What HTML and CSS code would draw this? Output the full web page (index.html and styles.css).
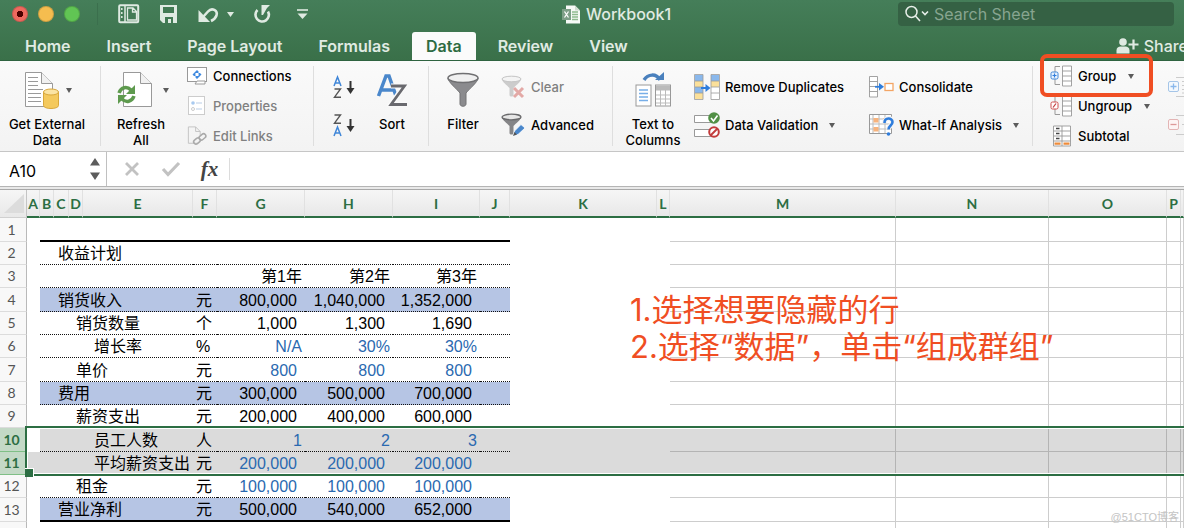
FILE: index.html
```html
<!DOCTYPE html>
<html lang="zh-CN">
<head>
<meta charset="utf-8">
<title>Workbook1</title>
<link rel="stylesheet" href="styles.css">
</head>
<body>
<header class="window-head">
  <div class="titlebar">
    <div class="lights">
      <button class="light light-close" aria-label="Close"></button>
      <button class="light light-min" aria-label="Minimize"></button>
      <button class="light light-max" aria-label="Zoom"></button>
    </div>
    <div class="quick">
      <button class="tool" aria-label="Gallery"><svg width="22" height="20" viewBox="0 0 22 20"><rect x="1.2" y="1.2" width="19" height="17" rx="1" fill="none" stroke="#dfeae2" stroke-width="2"/><path d="M7 1v18" stroke="#dfeae2" stroke-width="1.5"/><path d="M3.8 4v2M3.8 8v2M3.8 12v2" stroke="#dfeae2" stroke-width="1.5"/><path d="M9.500 4h5.500l3.500 3.500v8.500h-9zM14.500 4v4h4" fill="none" stroke="#dfeae2" stroke-width="1.300"/></svg></button>
      <button class="tool" aria-label="Save"><svg width="20" height="20" viewBox="0 0 20 20"><path d="M1 1h17v18H4l-3-3z" fill="#dfeae2"/><path d="M4 3h11v6H4zM6 13h8v6h-2v-4H9v4H6z" fill="#427a54"/></svg></button>
      <button class="tool" aria-label="Undo"><svg width="22" height="20" viewBox="0 0 22 20"><path d="M5 13l5-5.500c4-4.500 10-1 8.500 4-1 3-2.500 4-5.500 5.500" fill="none" stroke="#dfeae2" stroke-width="2.600"/><path d="M.5 6v12h11.500z" fill="#dfeae2"/></svg></button>
      <button class="tool caret-tool" aria-label="Undo history"><svg width="7" height="6" viewBox="0 0 7 6"><path d="M0 1h7l-3.500 5z" fill="#dfeae2"/></svg></button>
      <button class="tool" aria-label="Repeat"><svg width="18" height="20" viewBox="0 0 18 20"><path d="M4.500 6a6.700 6.700 0 1 0 10.500 1.500" fill="none" stroke="#dfeae2" stroke-width="2.600"/><path d="M8.500 1h8.500l-3 3-4 7H8.500z" fill="#dfeae2"/></svg></button>
      <button class="tool more-tool" aria-label="Customize toolbar"><svg width="11" height="11" viewBox="0 0 11 11"><path d="M0 1h11" stroke="#dfeae2" stroke-width="1.600"/><path d="M0.500 4.500h10L5.500 10z" fill="#dfeae2"/></svg></button>
    </div>
    <h1 class="doc-title"><svg width="18" height="19" viewBox="0 0 18 19"><path d="M4 .5h9l5 5V18.500H4z" fill="#f6f9f6"/><path d="M13 .5v5h5" fill="#cfdcd0"/><path d="M10 7h6M10 9.500h6M10 12h6M10 14.500h6" stroke="#8fba8f" stroke-width="1.300"/><rect y="4" width="9" height="11" fill="#7d9f87"/><path d="M2.500 6.500l4 6M6.500 6.500l-4 6" stroke="#fff" stroke-width="1.300"/></svg>Workbook1</h1>
    <label class="search"><svg width="24" height="18" viewBox="0 0 24 18"><circle cx="6.500" cy="7" r="5.500" fill="none" stroke="#e6eee8" stroke-width="1.500"/><path d="M10.500 11l4.500 5M17 6.500l3 3 3-3" fill="none" stroke="#e6eee8" stroke-width="1.600"/></svg><input type="text" placeholder="Search Sheet" aria-label="Search Sheet"></label>
  </div>
  <nav class="tabs">
    <button class="tab">Home</button>
    <button class="tab">Insert</button>
    <button class="tab">Page Layout</button>
    <button class="tab">Formulas</button>
    <button class="tab active">Data</button>
    <button class="tab">Review</button>
    <button class="tab">View</button>
    <button class="share"><svg width="23" height="16" viewBox="0 0 23 16"><circle cx="7" cy="4" r="3.800" fill="#dfeae2"/><path d="M.5 15.500v-3c0-3 2-4 4-4h5c2 0 4 1 4 4v3z" fill="#dfeae2"/><path d="M12.500 6.500h10M17.500 1.500v10" stroke="#dfeae2" stroke-width="2.200"/></svg>Share</button>
  </nav>
</header>

<section class="ribbon" aria-label="Data">
  <div class="group g-external">
    <button class="big"><span class="pic"><svg width="44" height="40" viewBox="0 0 44 40"><path d="M.5 2.500h16l11 11v23H.5z" fill="#fff" stroke="#999"/><path d="M16.500 2.500v11h11" fill="#f1f1f1" stroke="#999"/><path d="M3 7.500h10M3 11.500h10M3 15.500h10M3 19.500h15M3 23.500h13M3 27.500h13M3 31.500h13" stroke="#9a9a9a"/><path d="M18.500 22v13.500c0 4 15 4 15 0V22z" fill="#f4c95d" stroke="#d9a83c"/><ellipse cx="26" cy="22" rx="7.500" ry="3" fill="#fbe4a4" stroke="#d9a83c"/></svg></span><span>Get External<br>Data</span></button>
    <span class="caret"></span>
  </div>
  <div class="group g-refresh">
    <button class="big"><span class="pic"><svg width="48" height="40" viewBox="0 0 48 40"><path d="M6.500 2.500h17l11 11v23h-28z" fill="#fff" stroke="#999"/><path d="M23.500 2.500v11h11" fill="#f1f1f1" stroke="#999"/><path d="M2 23c2-6 8-7 12-3" fill="none" stroke="#5e9a4e" stroke-width="3.500"/><path d="M18 15v9H9z" fill="#5e9a4e"/><path d="M17 26c-2 6-8 7-12 3" fill="none" stroke="#5e9a4e" stroke-width="3.500"/><path d="M1 34v-9h9z" fill="#5e9a4e"/></svg></span><span>Refresh<br>All</span></button>
    <span class="caret"></span>
    <div class="stack three">
      <button class="small"><svg width="20" height="20" viewBox="0 0 20 20"><rect x=".5" y="1.500" width="19" height="14" fill="#fff" stroke="#999"/><path d="M8 18h10v-3h-8z" fill="#fff" stroke="#999"/><path d="M10 4l3 3H7zM10 13l3-3H7zM5.500 8.500l3-3v6zM14.500 8.500l-3-3v6z" fill="#3f8ae0"/><circle cx="10" cy="8.500" r="1.200" fill="#fff"/></svg>Connections</button>
      <button class="small" disabled><svg width="20" height="20" viewBox="0 0 20 20"><rect x="1.500" y=".5" width="16" height="18" fill="#fff" stroke="#ccc"/><circle cx="6" cy="7" r="1.800" fill="#a9caf0"/><circle cx="6" cy="13" r="1.500" fill="none" stroke="#ccc"/><path d="M9 7h6M9 13h6" stroke="#b9cde6"/></svg>Properties</button>
      <button class="small" disabled><svg width="20" height="20" viewBox="0 0 22 22"><path d="M12 19H1.500V1h8l5 5v4M9.500 1v5h5" fill="none" stroke="#c0c0c0"/><g fill="none" stroke="#aaa" stroke-width="1.700"><rect x="7" y="14" width="8" height="5" rx="2.500" transform="rotate(-40 11 16.500)"/><rect x="13" y="9.500" width="8" height="5" rx="2.500" transform="rotate(-40 17 12)"/></g></svg>Edit Links</button>
    </div>
  </div>
  <div class="group g-sort">
    <div class="stack two">
      <button class="small" aria-label="Sort ascending"><svg width="23" height="24" viewBox="0 0 23 24"><path d="M1 11L4.500 2 8 11M2 8h5" fill="none" stroke="#3f86d8" stroke-width="1.500"/><path d="M1.500 14h6l-6 8.200h6.500" fill="none" stroke="#555" stroke-width="1.400"/><path d="M17.500 6v9" stroke="#333" stroke-width="2"/><path d="M13.500 13h8l-4 6z" fill="#333"/></svg></button>
      <button class="small" aria-label="Sort descending"><svg width="23" height="24" viewBox="0 0 23 24"><path d="M1.500 2h6l-6 8.200h6.500" fill="none" stroke="#555" stroke-width="1.400"/><path d="M1 23l3.500-9L8 23M2 20h5" fill="none" stroke="#3f86d8" stroke-width="1.500"/><path d="M17.500 6v9" stroke="#333" stroke-width="2"/><path d="M13.500 13h8l-4 6z" fill="#333"/></svg></button>
    </div>
    <button class="big"><span class="pic"><svg width="34" height="36" viewBox="0 0 34 36"><path d="M3.500 24L11 4h3l7 20M6.500 18h12" fill="none" stroke="#4a87cb" stroke-width="3.500"/><path d="M16 14h13L16 32h16" fill="none" stroke="#fafafa" stroke-width="5"/><path d="M16 14h13.500L16 32.500h16" fill="none" stroke="#69696e" stroke-width="2.800"/></svg></span><span>Sort</span></button>
  </div>
  <div class="group g-filter">
    <button class="big"><span class="pic"><svg width="34" height="36" viewBox="0 0 34 36"><path d="M2 6c0 4 8 10 12 15v11c0 3 6 3 6 0V21C24 16 32 10 32 6z" fill="#8b8b8e" stroke="#737375"/><ellipse cx="17" cy="6" rx="15" ry="4.500" fill="#f0f0f0" stroke="#707072" stroke-width="1.500"/></svg></span><span>Filter</span></button>
    <div class="stack two">
      <button class="small" disabled><svg width="25" height="24" viewBox="0 0 25 24"><path d="M1 4c0 3 5 6 7.500 9v7c0 2 4 2 4 0v-7C15 10 20 7 20 4z" fill="#ccc"/><ellipse cx="10.500" cy="4" rx="9.500" ry="2.800" fill="#f4f4f4" stroke="#c4c4c4"/><path d="M13 13l9 9M22 13l-9 9" stroke="#e3a9a6" stroke-width="3"/></svg>Clear</button>
      <button class="small"><svg width="25" height="24" viewBox="0 0 25 24"><path d="M1 4c0 3 5 6 7.500 9v7c0 2 4 2 4 0v-7C15 10 20 7 20 4z" fill="#858587"/><ellipse cx="10.500" cy="4" rx="9.500" ry="2.800" fill="#e6e6e6" stroke="#69696b" stroke-width="1.300"/><path d="M12 23l1.500-5L20 11.500l4 3.500-7 6.500z" fill="#4a87cb" stroke="#fff" stroke-width=".8"/><path d="M12 23l1.500-4 2.500 2.500z" fill="#555"/></svg>Advanced</button>
    </div>
  </div>
  <div class="group g-tools">
    <button class="big"><span class="pic"><svg width="38" height="38" viewBox="0 0 38 38"><path d="M10 9c4-6 12-7 16 0" fill="none" stroke="#4a80bd" stroke-width="3.500"/><path d="M21 9h9V1z" fill="#4a80bd"/><rect x="2" y="14" width="15" height="21" fill="#fff" stroke="#999"/><path d="M5 19h9M5 22.500h9M5 26h9M5 29.500h9" stroke="#77aee8" stroke-width="1.300"/><rect x="21.500" y="14" width="15" height="21" fill="#fff" stroke="#999"/><path d="M22 14.500h14v5H22z" fill="#bbb"/><path d="M22 24h14M22 28h14M22 32h14M26.500 19v16M31.500 19v16" stroke="#bbb"/></svg></span><span>Text to<br>Columns</span></button>
    <div class="stack two">
      <button class="small"><svg width="26" height="26" viewBox="0 0 26 26"><path d="M1 1h8v6H1zM17 1h8v6h-8zM1 13h8v6H1z" fill="#8ab8ec"/><path d="M1 7h8v6H1zM1 19h8v6H1zM17 7h8v6h-8z" fill="#fbe09a"/><path d="M17 13h8v12h-8z" fill="#fff"/><path d="M.5.5h8.500v25H.5zM17 .5h8.500v25H17zM1 7h8M1 13h8M1 19h8M17 7h8M17 13h8M17 19h8" fill="none" stroke="#999" stroke-width=".8"/><path d="M7 14h7" stroke="#2f7ddc" stroke-width="2"/><path d="M11.500 10l5 4-5 4z" fill="#2f7ddc"/></svg>Remove Duplicates</button>
      <button class="small"><svg width="26" height="26" viewBox="0 0 26 26"><path d="M.5 3.500h18v7H.5zM.5 17.500h18v7H.5z" fill="#fff" stroke="#999"/><circle cx="20" cy="6" r="5.800" fill="#519045"/><path d="M17 6l2.500 3L23.500 3.500" fill="none" stroke="#fff" stroke-width="1.600"/><circle cx="20" cy="20" r="4.800" fill="#fff" stroke="#c23b3b" stroke-width="2"/><path d="M16.500 23.500l7-7" stroke="#c23b3b" stroke-width="2"/></svg>Data Validation<span class="caret"></span></button>
    </div>
    <div class="stack two">
      <button class="small"><svg width="25" height="22" viewBox="0 0 25 22"><path d="M.5.5h8v20.500h-8zM.5 5.500h8M.5 10.500h8M.5 15.500h8" fill="#fff" stroke="#999" stroke-width=".9"/><path d="M6 10.800h6" stroke="#2f7ddc" stroke-width="1.800"/><path d="M10 7l5 3.800-5 3.800z" fill="#2f7ddc"/><rect x="16" y="7.500" width="8" height="7" fill="#fff" stroke="#f3a565" stroke-width="1.300"/></svg>Consolidate</button>
      <button class="small"><svg width="25" height="24" viewBox="0 0 25 24"><path d="M.5 1.500h22v19H.5z" fill="#fff" stroke="#999"/><path d="M4 2v18M10 2v18M16 2v18M1 6h21M1 11h21M1 16h21" stroke="#bbb"/><path d="M4.500 5h5v4.500h-5zM4.500 14h5v4.500h-5zM14 5h4v4h-4z" fill="#f7b37d"/><path d="M15.500 10c0-6 8-5.500 8-1 0 3.500-4 3.500-4 7.500" fill="none" stroke="#f5f5f5" stroke-width="5"/><path d="M15.500 10c0-6 8-5.500 8-1 0 3.500-4 3.500-4 7.500" fill="none" stroke="#2f7ddc" stroke-width="2.600"/><circle cx="19.500" cy="21" r="1.800" fill="#2f7ddc"/></svg>What-If Analysis<span class="caret"></span></button>
    </div>
  </div>
  <div class="group g-outline">
    <div class="stack three">
      <button class="small marked"><svg width="22" height="22" viewBox="0 0 22 22"><path d="M10 1.500H5v18h5" fill="none" stroke="#999"/><path d="M12.500 1h9v20h-9zM12.500 6h9M12.500 11h9M12.500 16h9" fill="#fff" stroke="#999" stroke-width=".9"/><rect x="1" y="7" width="7" height="7" rx="1.500" fill="#e8f2fd" stroke="#3f86d8"/><path d="M4.500 8.500v4M2.500 10.500h4" stroke="#2f7ddc" stroke-width="1.200"/></svg>Group<span class="caret"></span></button>
      <button class="small"><svg width="22" height="22" viewBox="0 0 22 22"><path d="M10 1.500H5v18h5" fill="none" stroke="#999"/><path d="M12.500 1h9v20h-9zM12.500 6h9M12.500 11h9M12.500 16h9" fill="#fff" stroke="#999" stroke-width=".9"/><rect x="1" y="7" width="7" height="7" rx="1.500" fill="#fff" stroke="#d05050"/><path d="M3 12.500l3-4" stroke="#c23b3b" stroke-width="1.200"/></svg>Ungroup<span class="caret"></span></button>
      <button class="small"><svg width="22" height="22" viewBox="0 0 22 22"><path d="M3.500 1h17v20h-17zM12 1v20M3.500 6h17M3.500 11h17M3.500 16h17" fill="#fff" stroke="#999" stroke-width=".9"/><path d="M6 3.500h3.500M6 8.500h3.500M6 13.500h3.500" stroke="#444" stroke-width="1.300"/><path d="M4.500 18.700h6M13.500 18.700h6" stroke="#ee8b3a" stroke-width="2.200"/></svg>Subtotal</button>
    </div>
    <div class="stack two detail">
      <button class="small" disabled aria-label="Show detail"><svg width="25" height="20" viewBox="0 0 25 20"><rect x=".5" y="4.500" width="10" height="10" rx="1.500" fill="#f3f8fd" stroke="#a5c5e8"/><path d="M5.500 6.500v6M2.500 9.500h6" stroke="#8ab8ec" stroke-width="1.300"/><path d="M8 .5h17M8 19.500h17M14 4.500h8M14 8.500h8M14 12.500h8M14 16h8" stroke="#ccc"/></svg></button>
      <button class="small" disabled aria-label="Hide detail"><svg width="25" height="20" viewBox="0 0 25 20"><rect x=".5" y="4.500" width="10" height="10" rx="1.500" fill="#fdf4f4" stroke="#e3b5b5"/><path d="M2.500 9.500h6" stroke="#d99" stroke-width="1.300"/><path d="M8 .5h17M8 19.500h17M14 9.500h8" stroke="#ccc"/></svg></button>
    </div>
  </div>
</section>

<section class="formula-bar">
  <input class="name-box" type="text" value="A10" aria-label="Name box">
  <button class="spin" aria-label="Choose name"><svg width="10" height="22" viewBox="0 0 10 22"><path d="M0 7.500h10L5 0zM0 14.500h10L5 22z" fill="#5c5c5c"/></svg></button>
  <button class="fx-btn" aria-label="Cancel" disabled><svg width="16" height="16" viewBox="0 0 16 16"><path d="M2 2l12 12M14 2L2 14" stroke="#c2c2c2" stroke-width="2.800"/></svg></button>
  <button class="fx-btn" aria-label="Enter" disabled><svg width="20" height="16" viewBox="0 0 20 16"><path d="M2 8l5 5.500L18 2" fill="none" stroke="#c2c2c2" stroke-width="3.200"/></svg></button>
  <button class="fx-btn fx">fx</button>
  <input class="formula" type="text" aria-label="Formula">
</section>

<main class="sheet">
  <table class="grid">
    <colgroup>
      <col class="c-head"><col class="c-a"><col class="c-b"><col class="c-c"><col class="c-d"><col class="c-e"><col class="c-f"><col class="c-g"><col class="c-h"><col class="c-i"><col class="c-j"><col class="c-k"><col class="c-l"><col class="c-m"><col class="c-n"><col class="c-o"><col class="c-p"><col>
    </colgroup>
    <thead>
      <tr><th class="corner"><svg width="20" height="19" viewBox="0 0 20 19"><path d="M20 0v19H0z" fill="#dcdcdc"/></svg></th><th>A</th><th>B</th><th>C</th><th>D</th><th>E</th><th>F</th><th>G</th><th>H</th><th>I</th><th>J</th><th>K</th><th>L</th><th>M</th><th>N</th><th>O</th><th>P</th><th></th></tr>
    </thead>
    <tbody>
      <tr class="rule"><th>1</th><td></td><td class="p" colspan="4"></td><td class="p"></td><td class="p"></td><td class="p"></td><td class="p"></td><td class="p"></td><td></td><td></td><td class="x"></td><td class="x"></td><td class="x"></td><td class="x"></td><td class="x"></td></tr>
      <tr><th>2</th><td></td><td class="p l1" colspan="4">收益计划</td><td class="p"></td><td class="p"></td><td class="p"></td><td class="p"></td><td class="p"></td><td></td><td></td><td class="x"></td><td class="x"></td><td class="x"></td><td class="x"></td><td class="x"></td></tr>
      <tr><th>3</th><td></td><td class="p" colspan="4"></td><td class="p"></td><td class="p n flush">第1年</td><td class="p n flush">第2年</td><td class="p n flush">第3年</td><td class="p"></td><td></td><td></td><td class="x"></td><td class="x"></td><td class="x"></td><td class="x"></td><td class="x"></td></tr>
      <tr class="band"><th>4</th><td></td><td class="p l1" colspan="4">销货收入</td><td class="p">元</td><td class="p n">800,000</td><td class="p n">1,040,000</td><td class="p n">1,352,000</td><td class="p"></td><td></td><td></td><td class="x"></td><td class="x"></td><td class="x"></td><td class="x"></td><td class="x"></td></tr>
      <tr><th>5</th><td></td><td class="p l2" colspan="4">销货数量</td><td class="p">个</td><td class="p n">1,000</td><td class="p n">1,300</td><td class="p n">1,690</td><td class="p"></td><td></td><td></td><td class="x"></td><td class="x"></td><td class="x"></td><td class="x"></td><td class="x"></td></tr>
      <tr class="blue"><th>6</th><td></td><td class="p l3" colspan="4">增长率</td><td class="p">%</td><td class="p n flush">N/A</td><td class="p n flush">30%</td><td class="p n flush">30%</td><td class="p"></td><td></td><td></td><td class="x"></td><td class="x"></td><td class="x"></td><td class="x"></td><td class="x"></td></tr>
      <tr class="blue"><th>7</th><td></td><td class="p l2" colspan="4">单价</td><td class="p">元</td><td class="p n">800</td><td class="p n">800</td><td class="p n">800</td><td class="p"></td><td></td><td></td><td class="x"></td><td class="x"></td><td class="x"></td><td class="x"></td><td class="x"></td></tr>
      <tr class="band"><th>8</th><td></td><td class="p l1" colspan="4">费用</td><td class="p">元</td><td class="p n">300,000</td><td class="p n">500,000</td><td class="p n">700,000</td><td class="p"></td><td></td><td></td><td class="x"></td><td class="x"></td><td class="x"></td><td class="x"></td><td class="x"></td></tr>
      <tr><th>9</th><td></td><td class="p l2" colspan="4">薪资支出</td><td class="p">元</td><td class="p n">200,000</td><td class="p n">400,000</td><td class="p n">600,000</td><td class="p"></td><td></td><td></td><td class="x"></td><td class="x"></td><td class="x"></td><td class="x"></td><td class="x"></td></tr>
      <tr class="blue picked"><th>10<span class="marquee"></span></th><td class="anchor"></td><td class="p l3" colspan="4">员工人数</td><td class="p">人</td><td class="p n flush">1</td><td class="p n flush">2</td><td class="p n flush">3</td><td class="p"></td><td></td><td></td><td class="x"></td><td class="x"></td><td class="x"></td><td class="x"></td><td class="x"></td></tr>
      <tr class="blue picked"><th>11</th><td></td><td class="p l3" colspan="4">平均薪资支出</td><td class="p">元</td><td class="p n">200,000</td><td class="p n">200,000</td><td class="p n">200,000</td><td class="p"></td><td></td><td></td><td class="x"></td><td class="x"></td><td class="x"></td><td class="x"></td><td class="x"></td></tr>
      <tr class="blue"><th>12</th><td></td><td class="p l2" colspan="4">租金</td><td class="p">元</td><td class="p n">100,000</td><td class="p n">100,000</td><td class="p n">100,000</td><td class="p"></td><td></td><td></td><td class="x"></td><td class="x"></td><td class="x"></td><td class="x"></td><td class="x"></td></tr>
      <tr class="band rule"><th>13</th><td></td><td class="p l1" colspan="4">营业净利</td><td class="p">元</td><td class="p n">500,000</td><td class="p n">540,000</td><td class="p n">652,000</td><td class="p"></td><td></td><td></td><td class="x"></td><td class="x"></td><td class="x"></td><td class="x"></td><td class="x"></td></tr>
      <tr><th></th><td></td><td colspan="4"></td><td></td><td></td><td></td><td></td><td></td><td></td><td></td><td class="x"></td><td class="x"></td><td class="x"></td><td class="x"></td><td class="x"></td></tr>
    </tbody>
  </table>
  <p class="note">1.选择想要隐藏的行<br>2.选择“数据”，单击“组成群组”</p>
  <span class="watermark">@51CTO博客</span>
</main>
</body>
</html>
```
FILE: styles.css
```css
* { box-sizing: border-box; }
body {
  margin: 0;
  height: 100vh;
  display: flex;
  flex-direction: column;
  overflow: hidden;
  background: #fff;
  color: #111;
  font-family: Inter, "Noto Sans CJK SC", sans-serif;
  font-size: 13px;
}
button {
  margin: 0;
  padding: 0;
  border: 0;
  background: none;
  color: inherit;
  font: inherit;
}
svg { display: block; flex: none; }

/* Window head */
.window-head {
  flex: none;
  background: linear-gradient(#457e59, #3a7049);
  border-bottom: 1px solid #2f6340;
  color: #e0ebe3;
}
.titlebar { display: flex; align-items: center; height: 28px; padding-right: 10px; }
.lights {
  display: flex;
  align-items: center;
  gap: 10px;
  width: 98px;
  height: 22px;
  padding-left: 12px;
  border-right: 1px solid #3b6f4d;
}
.light { width: 16px; height: 16px; border-radius: 50%; border: 1px solid #00000026; }
.light-close { background: radial-gradient(circle, #4d0000 0 3px, #ee6a5f 3px); }
.light-min { background: #f5bd4f; }
.light-max { background: #61c554; }
.quick { display: flex; align-items: center; width: 464px; padding-left: 20px; gap: 19px; }
.caret-tool { margin-left: -12px; }
.more-tool { margin-left: 7px; }
.doc-title { display: flex; align-items: center; gap: 6px; margin: 0; font-size: 16px; font-weight: 500; }
.search {
  display: flex;
  align-items: center;
  gap: 5px;
  width: 276px;
  height: 24px;
  margin-left: auto;
  padding: 0 7px;
  border-radius: 4px;
  background: #356144;
}
.search input {
  flex: 1;
  min-width: 0;
  padding: 0;
  border: 0;
  background: none;
  color: #fff;
  font: inherit;
  font-size: 16px;
}
.search input::placeholder { color: #87a590; }
.tabs { display: flex; align-items: flex-end; gap: 8px; height: 32px; padding-left: 11px; overflow: hidden; }
.tab { height: 28px; padding: 0 14px; font-size: 16px; font-weight: 600; white-space: nowrap; }
.tab.active { border-radius: 3px 3px 0 0; background: #fbfbfb; color: #2e6b42; }
.share {
  display: flex;
  flex: none;
  align-items: center;
  gap: 5px;
  height: 28px;
  margin-left: auto;
  margin-right: -4px;
  font-size: 16px;
  font-weight: 500;
}

/* Ribbon */
.ribbon {
  flex: none;
  display: flex;
  height: 91px;
  padding: 5px 0;
  background: linear-gradient(#fafafa, #f3f3f3);
  border-bottom: 1px solid #c6c6c6;
  color: #000;
  font-weight: 500;
}
.group { display: flex; flex: none; border-right: 1px solid #dedede; }
.big { display: flex; flex: none; flex-direction: column; align-items: center; justify-content: flex-start; padding-top: 4px; line-height: 16px; }
.pic { display: flex; flex: none; align-items: center; justify-content: center; height: 40px; margin-bottom: 6px; }
.stack { display: flex; flex: none; flex-direction: column; align-items: flex-start; }
.small { display: flex; flex: none; align-items: center; gap: 6px; white-space: nowrap; }
.small:disabled { color: #808080; }
.three .small { height: 30px; }
.three { margin-top: -5px; }
.two .small { height: 38px; gap: 5px; }
.two { padding-top: 2px; }
.caret {
  flex: none;
  border: 3px solid transparent;
  border-top: 5px solid #5c5c5c;
  border-bottom: 0;
}
.big + .caret { margin-top: 22px; }
.small .caret { margin-left: 6px; }
.g-external { width: 101px; }
.g-external .big { width: 94px; }
.g-external .caret { margin-left: -28px; }
.g-refresh { width: 213px; }
.g-refresh .big { width: 80px; }
.g-refresh .caret { margin-left: -18px; }
.g-refresh .stack { margin-left: 18px; }
.g-sort { width: 115px; }
.g-sort .stack { margin-left: 19px; }
.g-sort .big { width: 72px; }
.g-filter { width: 184px; }
.g-filter .big { width: 68px; }
.g-filter .stack { margin-left: 4px; }
.g-tools { width: 420px; }
.g-tools .big { width: 80px; }
.g-tools .stack { margin-left: 1px; }
.g-tools .big + .stack { width: 174px; }
.g-outline { border: 0; }
.g-outline .three { width: 118px; margin-left: 17px; }
.marked { position: relative; }
.marked::after {
  content: "";
  position: absolute;
  inset: -7px -19px -6px -10px;
  border: 4px solid #f04e23;
  border-radius: 7px;
}

/* Formula bar */
.formula-bar {
  flex: none;
  display: flex;
  align-items: center;
  height: 35px;
  border-bottom: 1px solid #b5b5b5;
}
.name-box { width: 90px; padding: 3px 9px 0; border: 0; font: inherit; font-size: 16px; }
.spin { display: flex; align-items: center; width: 17px; height: 34px; border-right: 1px solid #c0c0c0; }
.fx-btn { display: flex; align-items: center; justify-content: center; width: 39px; }
.spin + .fx-btn { margin-left: 5px; }
.fx { color: #444; font: italic 700 21px "Liberation Serif", serif; }
.formula { flex: 1; height: 22px; border: 0; border-left: 1px solid #dcdcdc; font: inherit; }

/* Sheet */
.sheet {
  position: relative;
  flex: 1;
  overflow: hidden;
  padding-top: 2px;
  background: #e9e9e9;
}
.grid {
  width: 100%;
  border-top: 1px solid #a9a9a9;
  border-spacing: 0;
  table-layout: fixed;
  background: #fff;
  color: #000;
  font-family: "Liberation Sans", "Noto Sans CJK SC", sans-serif;
  font-size: 16px;
  line-height: 20px;
}
.c-head { width: 27px; }
.c-a { width: 13px; }
.c-b { width: 14px; }
.c-c { width: 15px; }
.c-d { width: 14px; }
.c-e { width: 110px; }
.c-f { width: 24px; }
.c-g, .c-h { width: 88px; }
.c-i { width: 87px; }
.c-j { width: 30px; }
.c-k { width: 147px; }
.c-l { width: 13px; }
.c-m { width: 226px; }
.c-n { width: 153px; }
.c-o { width: 118px; }
.c-p { width: 14px; }
.grid th { padding: 0; font-family: Lato, sans-serif; font-size: 14px; text-align: center; }
.grid thead th {
  height: 28px;
  padding-top: 2px;
  border-right: 1px solid #e1e1e1;
  border-bottom: 2px solid #2c6e43;
  background: linear-gradient(#f6f6f6, #e8e8e8);
  color: #2c6e43;
}
.grid thead .corner { border-color: #c4c4c4; border-bottom: 1px solid #d0d0d0; vertical-align: bottom; }
.corner svg { margin: 0 0 4px 4px; }
.grid tbody tr { height: 23px; }
.grid tbody tr:nth-child(3n+1) { height: 24px; }
.grid tbody th {
  border-right: 1px solid #b9b9b9;
  border-bottom: 1px solid #dcdcdc;
  background: #f8f8f8;
  color: #555;
  font-weight: 400;
  padding-right: 3px;
}
.grid td { padding: 0; overflow: hidden; white-space: nowrap; }
.grid .p { padding: 2px 0 0 3px; border-bottom: 1px dotted #111; }
.rule .p { border-bottom: 2px solid #000; }
.band .p { background: #b6c5e4; }
.grid .l1 { padding-left: 18px; }
.grid .l2 { padding-left: 36px; }
.grid .l3 { padding-left: 54px; }
.grid .n { padding: 2px 8px 0 0; text-align: right; }
.grid .flush { padding-right: 3px; }
.blue .n { color: #2a69b0; }
.grid .x { border-right: 1px solid #cdcdcd; border-bottom: 1px solid #cdcdcd; }
.grid .picked td { background: #dbdbdb; }
.grid .picked .anchor { background: #fff; }
.grid .picked .x { border-color: #b4b4b4; }
.grid .picked th {
  position: relative;
  border-bottom-color: #7fbf86;
  background: #c3d9c6;
  color: #2c6e43;
  font-weight: 700;
}
.marquee {
  position: absolute;
  z-index: 1;
  top: -2px;
  left: 25px;
  width: 100vw;
  height: 50px;
  border: 2px solid #2c6e43;
  box-shadow: inset 0 0 0 1px #fff;
}
.marquee::after {
  content: "";
  position: absolute;
  left: -2px;
  bottom: -3px;
  width: 8px;
  height: 8px;
  border: solid #fff;
  border-width: 1px 1px 0 0;
  background: #2c6e43;
}
.note {
  position: absolute;
  top: 104px;
  left: 630px;
  margin: 0;
  color: #f04e23;
  font-size: 31px;
  line-height: 37px;
  white-space: nowrap;
}
.watermark { position: absolute; right: 5px; bottom: 2px; color: #c4c4c4; font: 11px/18px "Liberation Sans", "Noto Sans CJK SC", sans-serif; }
```
